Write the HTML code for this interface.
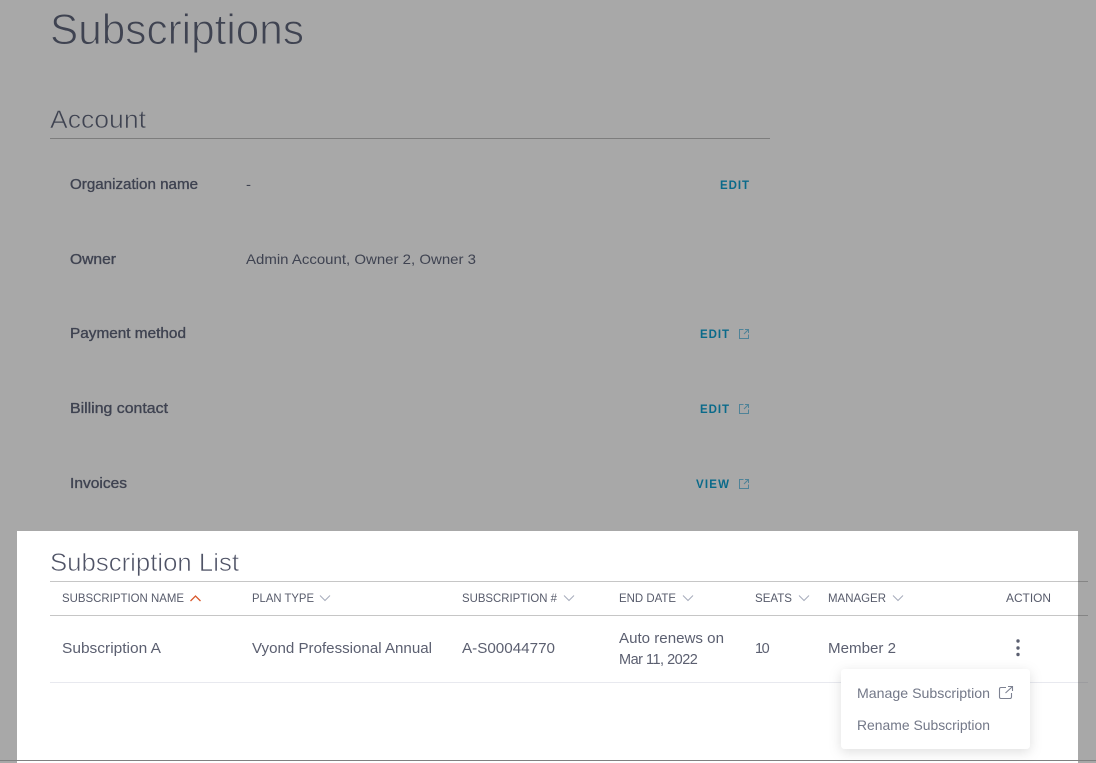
<!DOCTYPE html>
<html><head><meta charset="utf-8"><style>
html,body{margin:0;padding:0;width:1096px;height:763px;overflow:hidden;background:#a8a8a8}
svg{display:block;position:absolute;left:0;top:0}
text{font-family:"Liberation Sans",sans-serif}
.t{fill:#3f4351;stroke:#a8a8a8;paint-order:fill stroke}
.l{fill:#3f4351;font-size:14.5px;stroke:#3f4351;stroke-width:.35}
.v{fill:#3f4351;font-size:14px}
.a{fill:#0a6a8a;font-size:11.5px;font-weight:bold}
.h{fill:#575b6b;font-size:11.5px}
.c{fill:#5b5f70;font-size:14.5px}
.m{fill:#737888;font-size:14px}
.i{fill:none;stroke:#4f8398;stroke-width:1}
.d{fill:none;stroke:#a6abbb;stroke-width:1}
</style></head><body>
<svg width="1096" height="763" viewBox="0 0 1096 763">
<rect width="1096" height="763" fill="#a8a8a8"/>
<text class="t" x="50" y="44" font-size="43" stroke-width="1" textLength="254" lengthAdjust="spacingAndGlyphs">Subscriptions</text>
<text class="t" x="50" y="128" font-size="25" stroke-width=".6" textLength="96" lengthAdjust="spacingAndGlyphs">Account</text>
<rect x="50" y="138" width="720" height="1" fill="#7d7d7d"/>

<text class="l" x="70" y="189" textLength="128" lengthAdjust="spacingAndGlyphs">Organization name</text>
<text class="v" x="246" y="189" textLength="5" lengthAdjust="spacingAndGlyphs">-</text>
<text class="a" x="720" y="189" textLength="29" lengthAdjust="spacing">EDIT</text>

<text class="l" x="70" y="264" textLength="46" lengthAdjust="spacingAndGlyphs">Owner</text>
<text class="v" x="246" y="264" textLength="230" lengthAdjust="spacingAndGlyphs">Admin Account, Owner 2, Owner 3</text>

<text class="l" x="70" y="338" textLength="116" lengthAdjust="spacingAndGlyphs">Payment method</text>
<text class="a" x="700" y="338" textLength="29" lengthAdjust="spacing">EDIT</text>
<path class="i" d="M743.500 329.500h-4v9h9v-4M744 334l4.500-4.500M745 329.500h3.500v3.500"/>

<text class="l" x="70" y="413" textLength="98" lengthAdjust="spacingAndGlyphs">Billing contact</text>
<text class="a" x="700" y="413" textLength="29" lengthAdjust="spacing">EDIT</text>
<path class="i" d="M743.500 404.500h-4v9h9v-4M744 409l4.500-4.500M745 404.500h3.500v3.500"/>

<text class="l" x="70" y="488" textLength="57" lengthAdjust="spacingAndGlyphs">Invoices</text>
<text class="a" x="696" y="488" textLength="33" lengthAdjust="spacing">VIEW</text>
<path class="i" d="M743.500 479.500h-4v9h9v-4M744 484l4.500-4.500M745 479.500h3.500v3.500"/>

<rect x="17" y="531" width="1061" height="232" fill="#fff"/>
<text x="50" y="571" font-size="25" fill="#4f5366" stroke="#fff" stroke-width=".6" paint-order="fill stroke" textLength="189" lengthAdjust="spacingAndGlyphs">Subscription List</text>
<rect x="50" y="581" width="1028" height="1" fill="#c6c6c6"/>
<rect x="1078" y="581" width="10" height="1" fill="#858585"/>
<rect x="50" y="615" width="1028" height="1" fill="#c6c6c6"/>
<rect x="1078" y="615" width="10" height="1" fill="#858585"/>
<rect x="50" y="682" width="1028" height="1" fill="#e8e9ef"/>
<rect x="1078" y="682" width="10" height="1" fill="#9c9c9f"/>
<rect x="0" y="760" width="1096" height="1" fill="#808080"/>

<text class="h" x="62" y="602" textLength="122" lengthAdjust="spacingAndGlyphs">SUBSCRIPTION NAME</text>
<path d="M190.500 601l5-5 5 5" fill="none" stroke="#d8582c" stroke-width="1.300"/>
<text class="h" x="252" y="602" textLength="62" lengthAdjust="spacingAndGlyphs">PLAN TYPE</text>
<path class="d" d="M320 595.500l5 5 5-5"/>
<text class="h" x="462" y="602" textLength="95" lengthAdjust="spacingAndGlyphs">SUBSCRIPTION #</text>
<path class="d" d="M564 595.500l5 5 5-5"/>
<text class="h" x="619" y="602" textLength="57" lengthAdjust="spacingAndGlyphs">END DATE</text>
<path class="d" d="M683 595.500l5 5 5-5"/>
<text class="h" x="755" y="602" textLength="37" lengthAdjust="spacingAndGlyphs">SEATS</text>
<path class="d" d="M799 595.500l5 5 5-5"/>
<text class="h" x="828" y="602" textLength="58" lengthAdjust="spacingAndGlyphs">MANAGER</text>
<path class="d" d="M893 595.500l5 5 5-5"/>
<text class="h" x="1006" y="602" textLength="45" lengthAdjust="spacingAndGlyphs">ACTION</text>

<text class="c" x="62" y="653" textLength="99" lengthAdjust="spacingAndGlyphs">Subscription A</text>
<text class="c" x="252" y="653" textLength="180" lengthAdjust="spacingAndGlyphs">Vyond Professional Annual</text>
<text class="c" x="462" y="653" textLength="93" lengthAdjust="spacingAndGlyphs">A-S00044770</text>
<text class="c" x="619" y="643" textLength="105" lengthAdjust="spacingAndGlyphs">Auto renews on</text>
<text class="c" x="619" y="664" style="letter-spacing:-.5px">Mar 11, 2022</text>
<text class="c" x="755" y="653" style="letter-spacing:-1.500px">10</text>
<text class="c" x="828" y="653" textLength="68" lengthAdjust="spacingAndGlyphs">Member 2</text>
<circle cx="1018" cy="641" r="1.700" fill="#5b5f70"/>
<circle cx="1018" cy="648" r="1.700" fill="#5b5f70"/>
<circle cx="1018" cy="654.500" r="1.700" fill="#5b5f70"/>

<defs><filter id="s" x="-20%" y="-30%" width="140%" height="170%"><feDropShadow dx="0" dy="3" stdDeviation="6" flood-color="#000" flood-opacity=".13"/></filter></defs>
<rect x="841" y="669" width="189" height="80" rx="4" fill="#fff" filter="url(#s)"/>
<text class="m" x="857" y="698" textLength="133" lengthAdjust="spacingAndGlyphs">Manage Subscription</text>
<path d="M1006 687.500h-5a1.500 1.500 0 0 0-1.500 1.500v8a1.500 1.500 0 0 0 1.500 1.500h9a1.500 1.500 0 0 0 1.500-1.500v-4M1005.500 693l7-6.500M1008 686.500h4.500v4.500" fill="none" stroke="#7d8292" stroke-width="1.100"/>
<text class="m" x="857" y="730" textLength="133" lengthAdjust="spacingAndGlyphs">Rename Subscription</text>
</svg>
</body></html>
